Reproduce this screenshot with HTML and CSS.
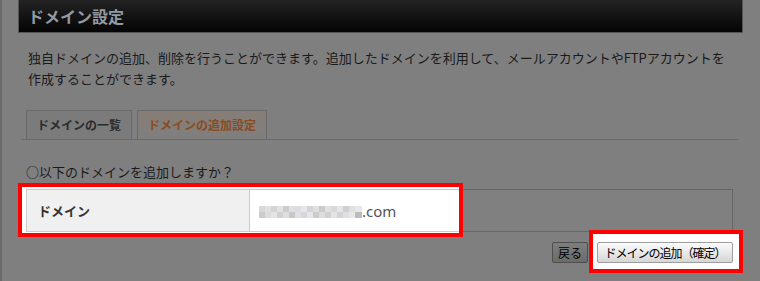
FILE: index.html
```html
<!DOCTYPE html>
<html lang="ja">
<head>
<meta charset="utf-8">
<title>ドメイン設定</title>
<link rel="stylesheet" href="styles.css">
</head>
<body>
<div class="page">
  <div class="frame">
    <h1 class="title">ドメイン設定</h1>
    <p class="lead">独自ドメインの追加、削除を行うことができます。追加したドメインを利用して、メールアカウントやFTPアカウントを作成することができます。</p>
    <ul class="tabs">
      <li class="tab">ドメインの一覧</li>
      <li class="tab active">ドメインの追加設定</li>
    </ul>
    <p class="question">○以下のドメインを追加しますか？</p>
    <table class="confirm">
      <tr>
        <th>ドメイン</th>
        <td><span class="mosaic"></span>.com</td>
      </tr>
    </table>
    <div class="actions">
      <button class="btn btn-back">戻る</button>
      <button class="btn btn-submit">ドメインの追加（確定）</button>
    </div>
  </div>
  <div class="highlight hl-row"></div>
  <div class="highlight hl-btn"></div>
</div>
</body>
</html>
```
FILE: styles.css
```css
html, body {
  margin: 0;
  background: #7f7f7f;
}
body {
  font-family: "Noto Sans CJK JP", "Noto Sans", sans-serif;
  color: #1a1a1a;
}
.page {
  position: relative;
  border-left: 2px solid #6a6a6a;
  min-height: 281px;
  box-sizing: border-box;
}
.frame {
  margin-left: 16px;
  width: 725px;
}
.title {
  margin: 0;
  height: 32px;
  line-height: 32px;
  border: 1px solid #555;
  border-top: 0;
  background: linear-gradient(#232323, #040404);
  color: #929ba3;
  font-size: 16px;
  font-weight: bold;
  padding-left: 9px;
}
.lead {
  margin: 14px 0 0;
  padding: 0 10px;
  font-size: 13px;
  line-height: 21px;
}
.tabs {
  list-style: none;
  margin: 21px 5px 0 3px;
  padding: 0 0 0 5px;
  display: flex;
  gap: 5px;
  border-bottom: 1px solid #6a6a6a;
}
.tab {
  height: 28px;
  line-height: 28px;
  padding: 0 10px;
  border: 1px solid #6a6a6a;
  border-bottom: 0;
  font-size: 12px;
  font-weight: bold;
  color: #2b2b2b;
  background: #7b7b7b;
}
.tab.active {
  color: #8b4b1d;
  background: linear-gradient(#877d76, #7f7f7f);
}
.question {
  margin: 21px 0 0;
  padding-left: 8px;
  font-size: 13px;
  line-height: 21px;
}
.confirm {
  margin: 7px 0 0 8px;
  width: 707px;
  border-collapse: collapse;
}
.confirm th,
.confirm td {
  border: 1px solid #666;
  height: 41px;
  padding-top: 0;
  padding-bottom: 0;
}
.confirm th {
  width: 211px;
  padding-left: 11px;
  padding-right: 0;
  background: #787878;
  text-align: left;
  font-size: 13px;
  font-weight: bold;
  color: #1a1a1a;
}
.confirm td {
  padding-left: 9px;
  background: #808080;
  font-family: "Noto Sans", sans-serif;
  font-size: 15px;
  color: #2a2a2a;
}
.mosaic {
  display: inline-block;
  width: 103px;
  height: 12px;
  vertical-align: -1px;
  background:
    linear-gradient(90deg, #6c6c6c 0 6px, #707070 6px 12px, #6a6a6a 12px 18px, #727171 18px 24px, #666666 24px 30px, #707070 30px 36px, #6d6f71 36px 42px, #737373 42px 48px, #6a6a6b 48px 54px, #707070 54px 60px, #656565 60px 66px, #717070 66px 72px, #6c6c6e 72px 78px, #737373 78px 84px, #686868 84px 90px, #6e7072 90px 96px, #747474 96px 103px) top / 100% 50% no-repeat,
    linear-gradient(90deg, #666666 0 6px, #6e6e6e 6px 12px, #727272 12px 18px, #686868 18px 24px, #6f6f6f 24px 30px, #646464 30px 36px, #707070 36px 42px, #6a6c6e 42px 48px, #737373 48px 54px, #666666 54px 60px, #6f6e6e 60px 66px, #686868 66px 72px, #727272 72px 78px, #6a6a6c 78px 84px, #707070 84px 90px, #747474 90px 96px, #5e5e5e 96px 103px) bottom / 100% 50% no-repeat;
}
.actions {
  display: flex;
  justify-content: flex-end;
  gap: 9px;
  margin-top: 10px;
  padding-right: 10px;
}
.btn {
  height: 21px;
  padding: 0;
  border: 1px solid #4f4f4f;
  border-radius: 2px;
  background: linear-gradient(#7e7e7e, #6b6b6b);
  font-family: "Noto Sans CJK JP", "Noto Sans", sans-serif;
  font-size: 12px;
  line-height: 19px;
  color: #000;
}
.btn-back {
  width: 36px;
}
.btn-submit {
  width: 136px;
  letter-spacing: -1px;
}
.highlight {
  position: absolute;
  box-sizing: border-box;
  border: 4px solid #ff0000;
  backdrop-filter: brightness(2);
}
.hl-row {
  left: 16px;
  top: 183px;
  width: 445px;
  height: 54px;
}
.hl-btn {
  left: 587px;
  top: 230px;
  width: 154px;
  height: 43px;
}
```
